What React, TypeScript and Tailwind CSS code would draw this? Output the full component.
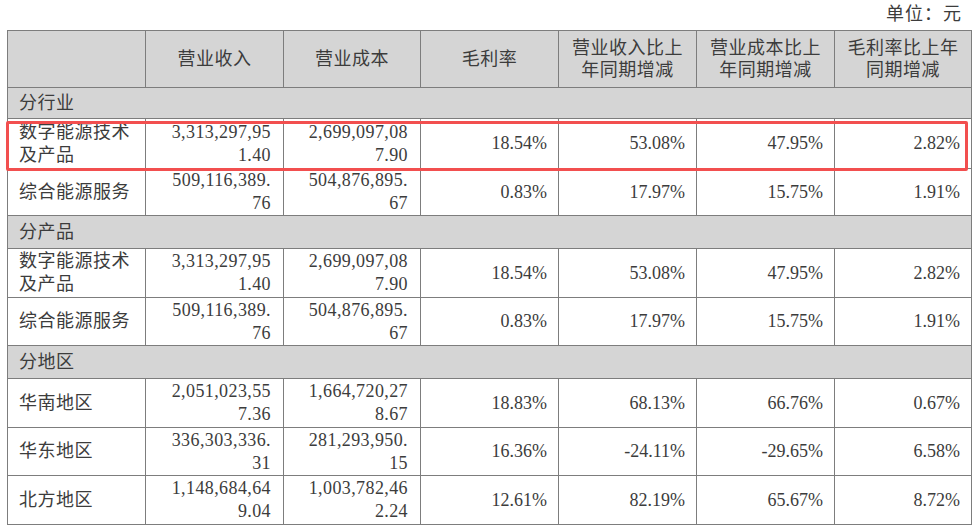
import React from 'react';

type Row = {
  label: string[];
  rev: string[];
  cost: string[];
  margin: string;
  revYoy: string;
  costYoy: string;
  marginYoy: string;
  h: string;
};

type Section = { title: string; h: string; rows: Row[] };

const digital = ['数字能源技术', '及产品'];
const service = ['综合能源服务'];

const sections: Section[] = [
  {
    title: '分行业',
    h: 'h-[31px]',
    rows: [
      { label: digital, rev: ['3,313,297,95', '1.40'], cost: ['2,699,097,08', '7.90'], margin: '18.54%', revYoy: '53.08%', costYoy: '47.95%', marginYoy: '2.82%', h: 'h-[50px]' },
      { label: service, rev: ['509,116,389.', '76'], cost: ['504,876,895.', '67'], margin: '0.83%', revYoy: '17.97%', costYoy: '15.75%', marginYoy: '1.91%', h: 'h-[47px]' },
    ],
  },
  {
    title: '分产品',
    h: 'h-[33px]',
    rows: [
      { label: digital, rev: ['3,313,297,95', '1.40'], cost: ['2,699,097,08', '7.90'], margin: '18.54%', revYoy: '53.08%', costYoy: '47.95%', marginYoy: '2.82%', h: 'h-[49px]' },
      { label: service, rev: ['509,116,389.', '76'], cost: ['504,876,895.', '67'], margin: '0.83%', revYoy: '17.97%', costYoy: '15.75%', marginYoy: '1.91%', h: 'h-[48px]' },
    ],
  },
  {
    title: '分地区',
    h: 'h-[33px]',
    rows: [
      { label: ['华南地区'], rev: ['2,051,023,55', '7.36'], cost: ['1,664,720,27', '8.67'], margin: '18.83%', revYoy: '68.13%', costYoy: '66.76%', marginYoy: '0.67%', h: 'h-[49px]' },
      { label: ['华东地区'], rev: ['336,303,336.', '31'], cost: ['281,293,950.', '15'], margin: '16.36%', revYoy: '-24.11%', costYoy: '-29.65%', marginYoy: '6.58%', h: 'h-[48px]' },
      { label: ['北方地区'], rev: ['1,148,684,64', '9.04'], cost: ['1,003,782,46', '2.24'], margin: '12.61%', revYoy: '82.19%', costYoy: '65.67%', marginYoy: '8.72%', h: 'h-[49px]' },
    ],
  },
];

const headers = [
  '',
  '营业收入',
  '营业成本',
  '毛利率',
  '营业收入比上\n年同期增减',
  '营业成本比上\n年同期增减',
  '毛利率比上年\n同期增减',
];

const cell = 'border border-[#7d7d7d] p-0';

function Lines({ lines }: { lines: string[] }) {
  return (
    <>
      {lines.map((l, i) => (
        <div key={i}>{l}</div>
      ))}
    </>
  );
}

export default function App() {
  return (
    <div
      className="relative w-[975px] h-[529px] bg-white text-[#3c3c3c] text-[18px] overflow-hidden"
      style={{ fontFamily: '"Liberation Serif", "Noto Sans CJK SC", serif' }}
    >
      <div className="h-[30px] flex items-end justify-end pr-[13px] pb-[6px] leading-[20px] tracking-[1px]">
        单位：元
      </div>

      <table className="ml-[7px] w-[964px] table-fixed border-collapse">
        <colgroup>
          <col className="w-[138px]" />
          <col className="w-[138px]" />
          <col className="w-[137px]" />
          <col className="w-[138px]" />
          <col className="w-[138px]" />
          <col className="w-[138px]" />
          <col className="w-[137px]" />
        </colgroup>
        <thead>
          <tr className="h-[57px] bg-[#d5d5d5]">
            {headers.map((h, i) => (
              <th
                key={i}
                className={`${cell} font-normal text-center leading-[22px] tracking-[0.5px] whitespace-pre-line`}
              >
                {h}
              </th>
            ))}
          </tr>
        </thead>
        <tbody>
          {sections.map((s) => (
            <React.Fragment key={s.title}>
              <tr className={`${s.h} bg-[#d5d5d5]`}>
                <td colSpan={7} className={`${cell} pl-[11px] leading-[22px] tracking-[0.5px]`}>
                  {s.title}
                </td>
              </tr>
              {s.rows.map((r, i) => (
                <tr key={i} className={r.h}>
                  <td className={`${cell} pl-[11px] leading-[23px] tracking-[0.5px]`}>
                    <Lines lines={r.label} />
                  </td>
                  <td className={`${cell} pr-[12px] text-right leading-[23px] tracking-[0.4px]`}>
                    <Lines lines={r.rev} />
                  </td>
                  <td className={`${cell} pr-[12px] text-right leading-[23px] tracking-[0.4px]`}>
                    <Lines lines={r.cost} />
                  </td>
                  <td className={`${cell} pr-[11px] text-right`}>{r.margin}</td>
                  <td className={`${cell} pr-[11px] text-right`}>{r.revYoy}</td>
                  <td className={`${cell} pr-[11px] text-right`}>{r.costYoy}</td>
                  <td className={`${cell} pr-[11px] text-right`}>{r.marginYoy}</td>
                </tr>
              ))}
            </React.Fragment>
          ))}
        </tbody>
      </table>

      {/* highlight annotation over the first data row */}
      <div className="absolute left-[6px] top-[121px] w-[962px] h-[50px] border-[3px] border-[#f24f4f] rounded-[2px] pointer-events-none" />
    </div>
  );
}
